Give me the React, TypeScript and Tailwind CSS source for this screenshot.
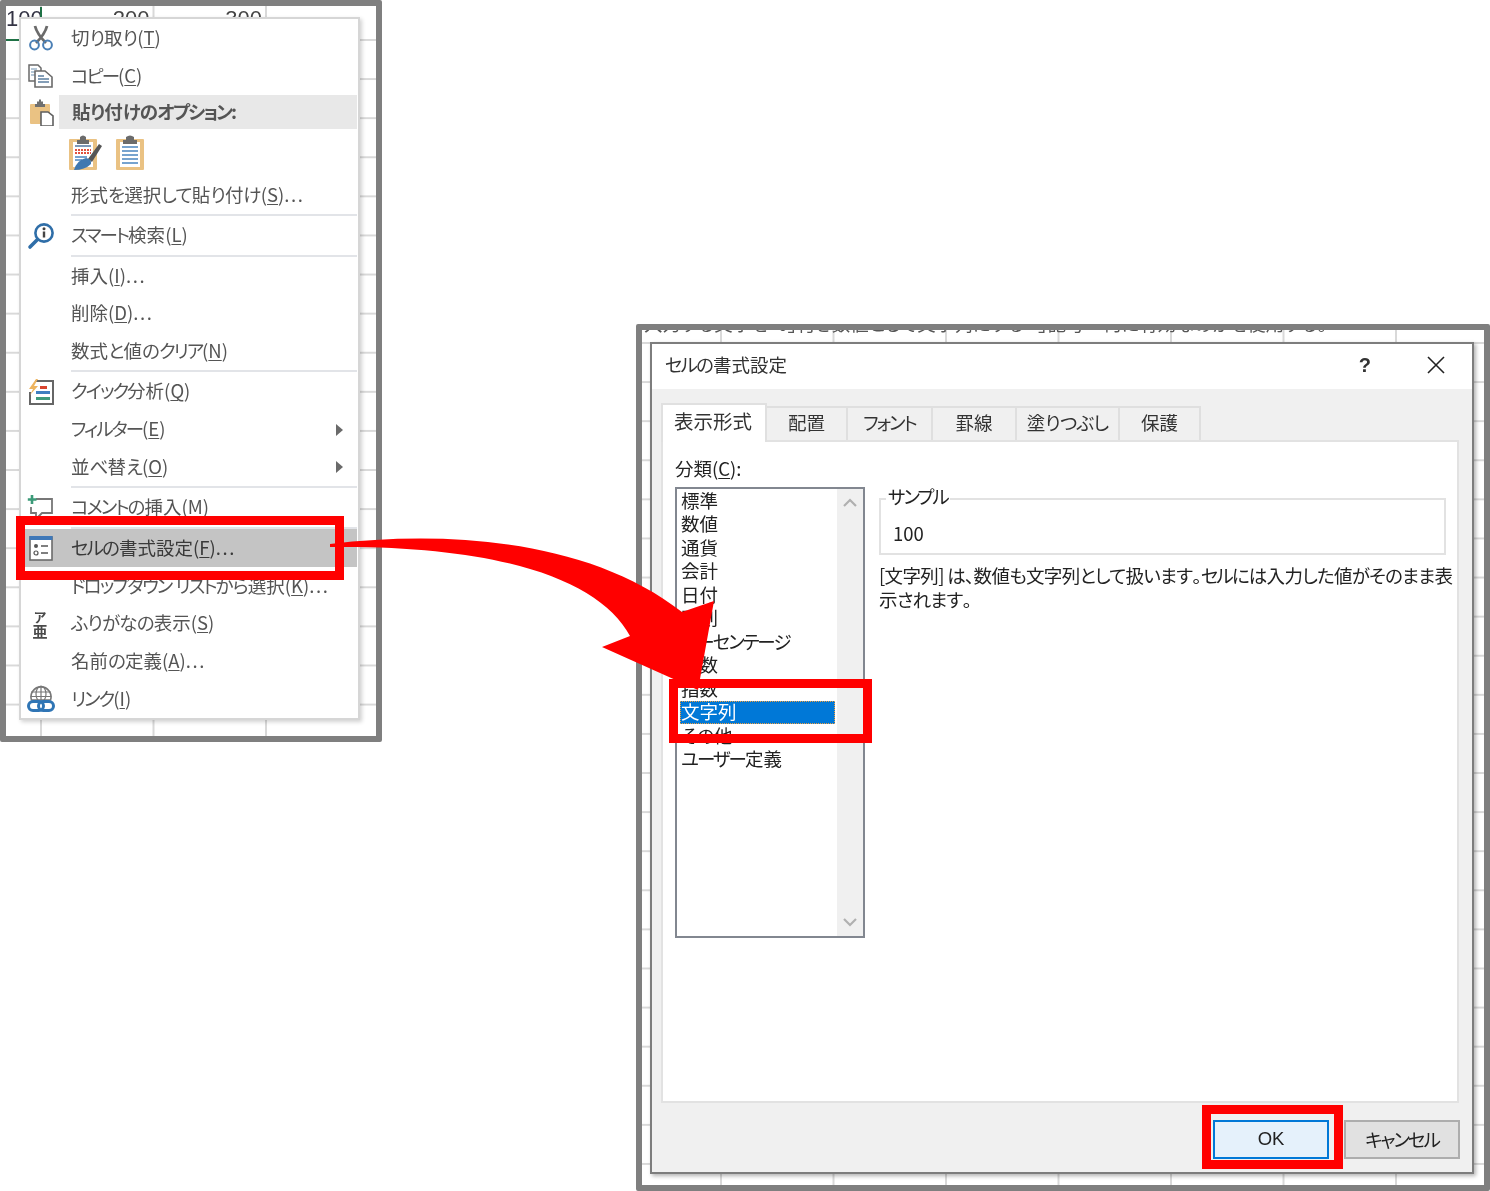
import React from "react";

const JP = "font-['Noto_Sans_CJK_JP','Noto_Sans',sans-serif] [font-feature-settings:'palt']";

function Svg({ children }: { children: React.ReactNode }) {
  return (
    <svg viewBox="0 0 28 28" className="w-[28px] h-[28px] shrink-0" fill="none">
      {children}
    </svg>
  );
}

function K({ children }: { children: string }) {
  const parts = children.match(/[\u30A0-\u30FF]+|[\u3040-\u309F]+|\.\.\.|[^\u30A0-\u30FF\u3040-\u309F.]+/g) || [];
  return (
    <>
      {parts.map((p, i) => {
        if (/^[\u30A0-\u30FF]/.test(p)) return <span key={i} className="tracking-[-2px]">{p}</span>;
        if (/^[\u3040-\u309F]/.test(p)) return <span key={i} className="tracking-[-0.8px]">{p}</span>;
        if (p === "...") return <span key={i} className="tracking-[1.6px]">{p}</span>;
        return <span key={i}>{p}</span>;
      })}
    </>
  );
}

const Scissors = () => (
  <Svg>
    <path d="M8 2 Q10 10 19 19 M20 2 Q18 10 9 19" stroke="#6b6b6b" strokeWidth="2.8" />
    <circle cx="7.5" cy="21" r="4.4" stroke="#4a7fb5" strokeWidth="2" />
    <circle cx="20.5" cy="21" r="4.4" stroke="#4a7fb5" strokeWidth="2" />
  </Svg>
);
const Copy = () => (
  <Svg>
    <path d="M2 3 H11 L14 6 V19 H2 Z" fill="#fff" stroke="#6a6a6a" strokeWidth="1.5" />
    <path d="M4 7 H10 M4 10 H10 M4 13 H8" stroke="#6c8fb0" strokeWidth="1.2" />
    <path d="M8 9 H18 L25 15 V25 H8 Z" fill="#fff" stroke="#6a6a6a" strokeWidth="1.6" />
    <path d="M11 14 H17 M11 17 H22 M11 20 H22" stroke="#5c7fa0" strokeWidth="1.4" />
  </Svg>
);
const Paste = () => (
  <Svg>
    <rect x="3" y="6" width="20" height="20" rx="1" fill="#eac283" />
    <path d="M10 6 V3.5 H12 V1.5 H14 V3.5 H16 V6 H18 V9 H8 V6 Z" fill="#6f6f6f" />
    <path d="M14 14 H21 L26 18 V28 H14 Z" fill="#fff" stroke="#5f5f5f" strokeWidth="1.6" />
  </Svg>
);
const Magnifier = () => (
  <Svg>
    <circle cx="17" cy="11" r="8.6" fill="#fff" stroke="#2f6ea8" strokeWidth="2.6" />
    <path d="M10.5 17.5 L3 25" stroke="#2f6ea8" strokeWidth="3.6" strokeLinecap="round" />
    <circle cx="17" cy="6.8" r="1.5" fill="#444" />
    <path d="M17 9.5 V15.5" stroke="#444" strokeWidth="2.4" />
  </Svg>
);
const Quick = () => (
  <Svg>
    <path d="M8 3 H26 V26 H3 V14" fill="#fff" stroke="#666" strokeWidth="2" />
    <path d="M9 1 L2 11 H6 L3 17 L11 8 H7 L11 1 Z" fill="#eeb45e" />
    <path d="M13 8 H20 V11 H13 Z" fill="#d9442e" />
    <path d="M9 13 H23 V16 H9 Z" fill="#3f7fc0" />
    <path d="M9 19 H23 V22 H9 Z" fill="#3f9a7c" />
  </Svg>
);
const Comment = () => (
  <Svg>
    <path d="M9 5 H25 V19 H15 L9 25 V19 H4 V13" fill="#fff" stroke="#777" strokeWidth="1.8" />
    <path d="M5 1 V10 M0.8 5.5 H9.5" stroke="#3b9a78" strokeWidth="2.6" />
  </Svg>
);
const CellFormat = () => (
  <Svg>
    <rect x="3" y="3" width="22" height="23" fill="#fff" stroke="#6b6b6b" strokeWidth="1.6" />
    <rect x="2.5" y="2" width="23" height="4" fill="#3f78b8" />
    <circle cx="9" cy="12" r="2" fill="#555" />
    <circle cx="9" cy="19" r="2" stroke="#555" strokeWidth="1.2" />
    <path d="M14 12 H21 M14 19 H21" stroke="#555" strokeWidth="1.6" />
  </Svg>
);
const Furigana = () => (
  <span className={`${JP} flex flex-col items-center text-[#4a4a4a] font-bold leading-none -ml-[2px]`}>
    <span className="text-[13px] leading-[13px]">ア</span>
    <span className="text-[15px] leading-[15px]">亜</span>
  </span>
);
const LinkIcon = () => (
  <Svg>
    <path d="M4.5 15 A10 10 0 1 1 23.5 15 Z" fill="#fff" stroke="#777" strokeWidth="1.6" />
    <path d="M14 1.5 V15 M4 7 H24 M3.5 11.5 H24.5" stroke="#777" strokeWidth="1.2" />
    <ellipse cx="14" cy="9" rx="5" ry="8" stroke="#777" strokeWidth="1.2" />
    <rect x="1.5" y="16.5" width="15" height="9" rx="4.5" stroke="#2f75b5" strokeWidth="3" />
    <rect x="11.5" y="16.5" width="15" height="9" rx="4.5" stroke="#2f75b5" strokeWidth="3" />
  </Svg>
);

function PasteFormat() {
  return (
    <svg viewBox="0 0 35 36" className="w-[35px] h-[36px]" fill="none">
      <rect x="1" y="4" width="28" height="31" rx="1" fill="#eac283" />
      <rect x="5" y="7" width="20" height="25" fill="#fff" />
      <path d="M9 5 H12 V2 Q15 -1 18 2 V5 H21 V9 H9 Z" fill="#6b6b6b" />
      <path d="M7 11 H23" stroke="#5c7fa8" strokeWidth="1.6" />
      <path d="M7 15 H23 M7 18 H23" stroke="#e0523f" strokeWidth="1.8" strokeDasharray="2 1" />
      <path d="M7 22 H19 M7 25 H14" stroke="#4a85c0" strokeWidth="1.6" />
      <path d="M20 24 L31 9 L34 11 L24 27 Z" fill="#555" />
      <path d="M6 35 Q9 25 18 23 Q24 24 23 29 Q17 35 6 35 Z" fill="#3f78b0" />
    </svg>
  );
}
function PasteValues() {
  return (
    <svg viewBox="0 0 30 36" className="w-[30px] h-[36px]" fill="none">
      <rect x="1" y="4" width="28" height="31" rx="1" fill="#eac283" />
      <rect x="5" y="7" width="20" height="25" fill="#fff" />
      <path d="M8 5 H11 V2 Q15 -1 19 2 V5 H22 V9 H8 Z" fill="#6b6b6b" />
      <path d="M7 12 H23 M7 16 H23 M7 20 H23 M7 24 H23 M7 28 H23" stroke="#4a85c0" strokeWidth="1.6" />
    </svg>
  );
}

function Label({ t, k, s = "" }: { t: string; k: string; s?: string }) {
  return (
    <span className="whitespace-nowrap">
      <K>{t}</K>(<span className="underline underline-offset-[2px] decoration-[1px]">{k}</span>)<K>{s}</K>
    </span>
  );
}

function Row({ h, icon, t, k, s, arrow, active }: { h: string; icon?: React.ReactNode; t: string; k: string; s?: string; arrow?: boolean; active?: boolean }) {
  return (
    <div className={`${h} flex items-center mr-[1px] ${active ? "bg-[#c4c4c4] text-[#3a3a3a]" : ""}`}>
      <div className="w-[40px] h-full flex items-center justify-center shrink-0">{icon}</div>
      <div className="pl-[10px] pb-[2px] flex-1">
        <Label t={t} k={k} s={s} />
      </div>
      {arrow && <div className="mr-[14px] border-l-[7px] border-l-[#6a6a6a] border-y-[6px] border-y-transparent" />}
    </div>
  );
}

const Sep = () => <div className="h-[2px] ml-[50px] mr-[1px] bg-[#e2e4e8]" />;

function Menu() {
  return (
    <div className={`${JP} absolute left-[13px] top-[11px] w-[341px] h-[703px] bg-white border-2 border-[#d6d6d6] shadow-[2px_2px_4px_rgba(0,0,0,0.18)] text-[18.5px] text-[#555] leading-none flex flex-col`}>
      <Row h="h-[38px]" icon={<Scissors />} t="切り取り" k="T" />
      <Row h="h-[38px]" icon={<Copy />} t="コピー" k="C" />
      <div className="h-[34px] flex items-center">
        <div className="w-[40px] flex justify-center shrink-0"><Paste /></div>
        <div className="flex-1 h-full ml-[-2px] mr-[1px] bg-[#e8e8e8] flex items-center pl-[13px] pb-[2px] font-bold text-[#555]"><K>貼り付けのオプション:</K></div>
      </div>
      <div className="h-[48px] flex items-center gap-[12px] pl-[47px]">
        <PasteFormat />
        <PasteValues />
      </div>
      <Row h="h-[37px]" t="形式を選択して貼り付け" k="S" s="..." />
      <Sep />
      <Row h="h-[39px]" icon={<Magnifier />} t="スマート検索" k="L" />
      <Sep />
      <Row h="h-[38px]" t="挿入" k="I" s="..." />
      <Row h="h-[37px]" t="削除" k="D" s="..." />
      <Row h="h-[38px]" t="数式と値のクリア" k="N" />
      <Sep />
      <Row h="h-[39px]" icon={<Quick />} t="クイック分析" k="Q" />
      <Row h="h-[37px]" t="フィルター" k="E" arrow />
      <Row h="h-[38px]" t="並べ替え" k="O" arrow />
      <Sep />
      <Row h="h-[39px]" icon={<Comment />} t="コメントの挿入" k="M" />
      <Sep />
      <Row h="h-[38px]" icon={<CellFormat />} t="セルの書式設定" k="F" s="..." active />
      <Row h="h-[38px]" t="ドロップダウン リストから選択" k="K" s="..." />
      <Row h="h-[37px]" icon={<Furigana />} t="ふりがなの表示" k="S" />
      <Row h="h-[38px]" t="名前の定義" k="A" s="..." />
      <Row h="h-[38px]" icon={<LinkIcon />} t="リンク" k="I" />
    </div>
  );
}

const TABS = [
  { n: "配置", w: "w-[81px]" },
  { n: "フォント", w: "w-[85px]" },
  { n: "罫線", w: "w-[84px]" },
  { n: "塗りつぶし", w: "w-[103px]" },
  { n: "保護", w: "w-[81px]" },
];
const CATS = ["標準", "数値", "通貨", "会計", "日付", "時刻", "パーセンテージ", "分数", "指数", "文字列", "その他", "ユーザー定義"];

function Dialog() {
  return (
    <div className={`${JP} absolute left-[8px] top-[12px] w-[824px] h-[832px] border-2 border-[#7d7d7d] shadow-[2px_2px_4px_rgba(0,0,0,0.3)] bg-white flex flex-col text-[18.5px] text-[#222] leading-none`}>
      <div className="h-[45px] shrink-0 flex items-center pl-[13px] pb-[4px] text-[#333]">
        <span className="flex-1"><K>セルの書式設定</K></span>
        <span className="font-bold text-[20px] mr-[56px] font-['Liberation_Sans',sans-serif]">?</span>
        <svg viewBox="0 0 18 18" className="w-[18px] h-[18px] mr-[27px]" stroke="#222" strokeWidth="1.6">
          <path d="M1 1 L17 17 M17 1 L1 17" />
        </svg>
      </div>
      <div className="flex-1 bg-[#f0f0f0] flex flex-col pl-[9px] pr-[12px] pt-[14px]">
        <div className="h-[37px] flex items-end shrink-0 text-[#333]">
          <div className="w-[106px] h-[39px] -mb-[2px] relative z-10 bg-white border-2 border-b-0 border-[#e0e0e0] flex items-center justify-center pb-[5px] pr-[2px] text-[19.5px]">表示形式</div>
          {TABS.map((t) => (
            <div key={t.n} className={`${t.w} h-[34px] border-2 border-l-0 border-b-0 border-[#dfdfdf] flex items-center justify-center pb-[3px]`}><K>{t.n}</K></div>
          ))}
        </div>
        <div className="w-[798px] h-[663px] bg-white border-2 border-[#e2e2e2] flex pl-[12px] pt-[13px] shrink-0">
          <div className="w-[190px] shrink-0">
            <div className="h-[26px] flex items-center"><Label t="分類" k="C" s=":" /></div>
            <div className="h-[451px] mt-[6px] border-2 border-[#828790] flex">
              <div className="w-[160px] shrink-0 pl-[3px] pr-[2px]">
                {CATS.map((c) => (
                  <div key={c} className={`h-[23.5px] flex items-center pl-[1px] pb-[2px] ${c === "文字列" ? "bg-[#0078d7] text-white outline-1 outline-dotted outline-offset-[-1px] outline-[#f0a040]" : ""}`}><K>{c}</K></div>
                ))}
              </div>
              <div className="flex-1 bg-[#f0f0f0] flex flex-col justify-between items-center py-[9px]">
                <svg viewBox="0 0 14 9" className="w-[14px] h-[9px]" fill="none" stroke="#b0b0b0" strokeWidth="2.2"><path d="M1 8 L7 2 L13 8" /></svg>
                <svg viewBox="0 0 14 9" className="w-[14px] h-[9px]" fill="none" stroke="#b0b0b0" strokeWidth="2.2"><path d="M1 1 L7 7 L13 1" /></svg>
              </div>
            </div>
          </div>
          <div className="ml-[14px] w-[569px]">
            <div className="relative mt-[43px] w-[567px] h-[57px] border-2 border-[#e2e2e2] flex items-center pl-[12px] pt-[14px]">
              <span className="absolute left-[5px] -top-[13px] px-[2px] bg-white"><K>サンプル</K></span>
              <span className="text-[#222]">100</span>
            </div>
            <p className="mt-[9px] whitespace-nowrap leading-[23.5px] tracking-[-0.65px]">
              <K>[文字列] は、数値も文字列として扱います。セルには入力した値がそのまま表</K>
              <br />
              <K>示されます。</K>
            </p>
          </div>
        </div>
        <div className="flex justify-end gap-[15px] mt-[17px]">
          <div className="w-[116px] h-[39px] bg-[#e5f1fb] border-2 border-[#0078d7] flex items-center justify-center font-['Liberation_Sans',sans-serif]">OK</div>
          <div className="w-[116px] h-[39px] bg-[#e1e1e1] border-2 border-[#adadad] flex items-center justify-center"><K>キャンセル</K></div>
        </div>
      </div>
    </div>
  );
}

export default function App() {
  return (
    <div className="relative w-[1490px] h-[1191px] bg-white overflow-hidden">
      <div className="absolute left-0 top-0 w-[382px] h-[742px] border-[6px] border-[#7f7f7f] rounded-[2px] overflow-hidden blur-[0.5px] bg-white bg-[linear-gradient(#d9d9d9_2px,transparent_2px),linear-gradient(90deg,#d9d9d9_2px,transparent_2px)] bg-[length:112.5px_39.1px] bg-[position:34px_33px]">
        <div className="flex h-[33px] pt-[1px] text-[22px] leading-[24px] text-[#444] font-['Liberation_Sans',sans-serif] text-right">
          <div className="w-[36px] h-[33px] pr-[4px] border-r-2 border-[#1e7145] text-[#334] overflow-hidden whitespace-nowrap">100</div>
          <div className="w-[112.5px] pr-[5px]">200</div>
          <div className="w-[112.5px] pr-[5px]">300</div>
        </div>
        <div className="h-[2px] w-[14px] bg-[#1e7145]" />
        <Menu />
      </div>

      <div className="absolute left-[636px] top-[324px] w-[854px] h-[867px] border-[6px] border-[#7f7f7f] rounded-[2px] overflow-hidden blur-[0.5px] bg-white bg-[linear-gradient(#d9d9d9_2px,transparent_2px),linear-gradient(90deg,#d9d9d9_2px,transparent_2px)] bg-[length:112.5px_39.1px] bg-[position:78px_12px]">
        <div className={`${JP} pl-[2px] h-[5px] overflow-hidden text-[18.5px] leading-none whitespace-nowrap text-[#555]`}>
          <div className="-mt-[16px]">入力する文字を「0」付き数値として文字列にする「'」記号ー何に有効なのかを使用する。</div>
        </div>
        <Dialog />
      </div>

      <svg viewBox="0 0 1490 1191" className="absolute left-0 top-0 w-[1490px] h-[1191px] pointer-events-none">
        <path d="M330 544 C450 530 590 540 682 612 L714 601 L698 690 L602 647 L630 636 C600 580 500 545 330 547 Z" fill="#ff0000" />
      </svg>
      <div className="absolute left-[16px] top-[516px] w-[328px] h-[64px] border-[9px] border-[#ff0000]" />
      <div className="absolute left-[669px] top-[679px] w-[203px] h-[64px] border-[9px] border-[#ff0000]" />
      <div className="absolute left-[1202px] top-[1105px] w-[141px] h-[64px] border-[9px] border-[#ff0000]" />
    </div>
  );
}
